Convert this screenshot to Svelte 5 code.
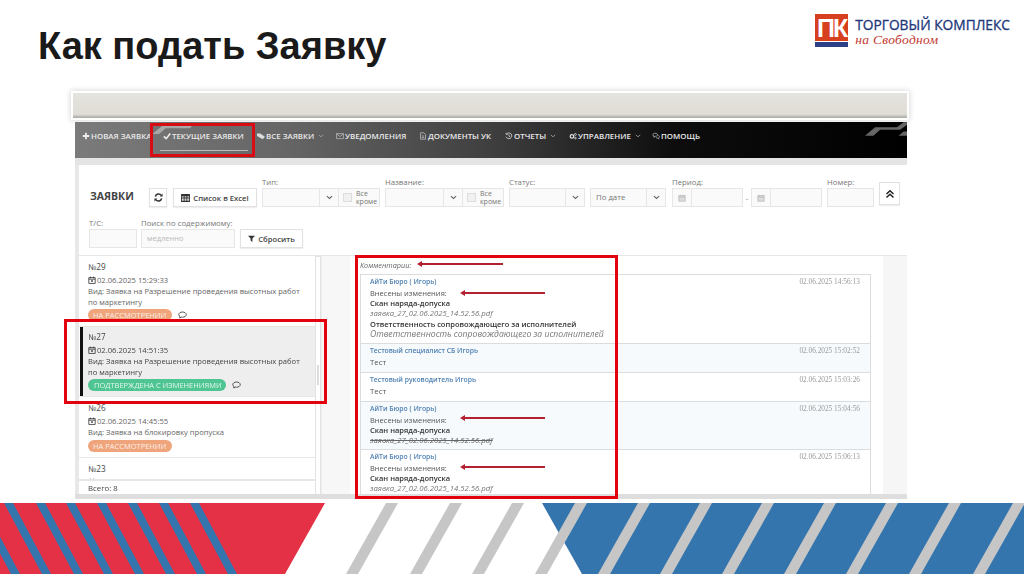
<script>
  const nav = [
    { t: 'Новая заявка', i: 'plus', w: 81 },
    { t: 'Текущие заявки', i: 'check', active: true, w: 94 },
    { t: 'Все заявки', i: 'tag', caret: true, w: 79 },
    { t: 'Уведомления', i: 'mail', w: 83 },
    { t: 'Документы УК', i: 'doc', w: 86 },
    { t: 'Отчеты', i: 'history', caret: true, w: 64 },
    { t: 'Управление', i: 'gears', caret: true, w: 83 },
    { t: 'Помощь', i: 'chat', w: 60 }
  ];
  const tickets = [
    { n: '№29', d: '02.06.2025 15:29:33', v: 'Вид: Заявка на Разрешение проведения высотных работ по маркетингу', s: 'На рассмотрении', c: 'orange', cm: true, h: 71 },
    { n: '№27', d: '02.06.2025 14:51:35', v: 'Вид: Заявка на Разрешение проведения высотных работ по маркетингу', s: 'Подтверждена с изменениями', c: 'green', cm: true, sel: true, h: 70 },
    { n: '№26', d: '02.06.2025 14:45:55', v: 'Вид: Заявка на блокировку пропуска', s: 'На рассмотрении', c: 'orange', h: 61 },
    { n: '№23', d: '02.06.2025 14:33:17', v: '', s: '', h: 22 }
  ];
  const comments = [
    { a: 'АйТи Бюро ( Игорь)', d: '02.06.2025 14:56:13', h: 69, lines: [['Внесены изменения:', 'plain'], ['Скан наряда-допуска', 'bold'], ['заявка_27_02.06.2025_14.52.56.pdf', 'ital'], ['Ответственность сопровождающего за исполнителей', 'bold'], ['Ответственность сопровождающего за исполнителей', 'phrase']] },
    { a: 'Тестовый специалист СБ Игорь', d: '02.06.2025 15:02:52', h: 29, tint: true, msg: 'Тест' },
    { a: 'Тестовый руководитель Игорь', d: '02.06.2025 15:03:26', h: 29, msg: 'Тест' },
    { a: 'АйТи Бюро ( Игорь)', d: '02.06.2025 15:04:56', h: 48, tint: true, lines: [['Внесены изменения:', 'plain'], ['Скан наряда-допуска', 'bold'], ['заявка_27_02.06.2025_14.52.56.pdf', 'strike']] },
    { a: 'АйТи Бюро ( Игорь)', d: '02.06.2025 15:06:13', h: 48, lines: [['Внесены изменения:', 'plain'], ['Скан наряда-допуска', 'bold'], ['заявка_27_02.06.2025_14.52.56.pdf', 'ital']] }
  ];
  const redStripes = [-27, 4, 36, 66, 97, 128, 159, 190];
  const grayStripes = [392, 456, 518, 581, 644, 706, 768, 830, 892, 955, 1019, 1082];
  const arrows = [[417, 264, 503], [460, 293, 545], [460, 418, 545], [460, 467, 545]];
</script>

<div class="slide">
  <header class="head">
    <h1>Как подать Заявку</h1>
    <div class="logo">
      <div class="mark"><span class="pk">ПК</span><i></i></div>
      <div class="brand">
        <b>ТОРГОВЫЙ КОМПЛЕКС</b>
        <em>на Свободном</em>
      </div>
    </div>
  </header>

  <section class="shot">
    <div class="topbar"></div>
    <nav class="nav">
      {#each nav as n}
        <span class="nav-item" class:active={n.active} style="width:{n.w}px">
          <svg class="ni" viewBox="0 0 10 10" aria-hidden="true">
            {#if n.i === 'plus'}<path d="M5 1v8M1 5h8" stroke="#eee" stroke-width="2.2" fill="none"/>
            {:else if n.i === 'check'}<path d="M1 5.5 4 8.3 9 2" stroke="#eee" stroke-width="2" fill="none"/>
            {:else if n.i === 'tag'}<path d="M0 2h4l6 4-3 3-7-4z" fill="#ddd"/>
            {:else if n.i === 'mail'}<path d="M.7 2h8.6v6.3H.7zM.7 2.4 5 5.6l4.3-3.2" stroke="#ccc" stroke-width=".8" fill="none"/>
            {:else if n.i === 'doc'}<path d="M2 1h4l2.2 2.2V9H2zM3.5 5h3M3.5 7h3" stroke="#ccc" stroke-width=".9" fill="none"/>
            {:else if n.i === 'history'}<path d="M2 2.5a3.6 3.6 0 1 1-.6 3.4M1.5 1v2h2M5 3v2.3l1.5 1" stroke="#ddd" stroke-width="1" fill="none"/>
            {:else if n.i === 'gears'}<circle cx="3.7" cy="5.5" r="2.2" fill="none" stroke="#ddd" stroke-width="1.6"/><circle cx="8" cy="3" r="1.2" fill="none" stroke="#ddd" stroke-width="1"/><circle cx="8" cy="7.6" r="1.1" fill="none" stroke="#ddd" stroke-width="1"/>
            {:else}<path d="M1 3.5C1 2.3 2.4 1.6 4 1.6s3 .7 3 1.9-1.400 1.900-3 1.900l-1.800 1.200.3-1.500C1.600 4.900 1 4.300 1 3.500zM8 4.200c.8.400 1.300 1 1.300 1.700 0 .7-.4 1.200-1 1.500l.2 1.100-1.400-.9c-1 0-1.800-.3-2.300-.9" stroke="#ddd" stroke-width=".8" fill="none"/>{/if}
          </svg>
          {n.t}
          {#if n.caret}<svg class="caret" viewBox="0 0 8 5" aria-hidden="true"><path d="M1 1l3 2.600L7 1" stroke="#aaa" fill="none"/></svg>{/if}
        </span>
      {/each}
      <svg class="swoosh left" viewBox="0 0 50 12" aria-hidden="true"><path d="M2 12 14 2h36l-3 3H18L10 12z" fill="#a8a8a8"/></svg>
      <svg class="swoosh right" viewBox="0 0 50 16" aria-hidden="true"><path d="M0 16 12 6h26L46 0h4v3l-8 6H18L10 16zM40 16l6-5h4v5z" fill="#666"/></svg>
    </nav>

    <div class="frame">
      <div class="filters">
        <div class="row r1">
          <h2>ЗАЯВКИ</h2>
          <button class="btn icon"><svg viewBox="0 0 10 10" width="9" height="9" aria-hidden="true"><path d="M1.500 4a3.600 3.600 0 0 1 6.500-1.300M8.500 6A3.600 3.600 0 0 1 2 7.300" stroke="#333" stroke-width="1.700" fill="none"/><path d="M9.500 .6v3.200H6.300zM.5 9.400V6.200h3.200z" fill="#333"/></svg></button>
          <button class="btn excel"><svg viewBox="0 0 10 9" width="9" height="8" aria-hidden="true"><path d="M0 0h10v9H0z" fill="#333"/><path d="M1 2.500h2v1.500H1zM4 2.500h2v1.500H4zM7 2.500h2v1.500H7zM1 5h2v2.500H1zM4 5h2v2.500H4zM7 5h2v2.500H7z" fill="#ddd"/></svg> Список в Excel</button>

          <div class="field w118"><label>Тип:</label>
            <div class="ctl"><span class="grow"></span><span class="arr"><svg viewBox="0 0 8 5" width="7" height="5" aria-hidden="true"><path d="M1 1l3 2.600L7 1" stroke="#666" stroke-width="1.300" fill="none"/></svg></span><span class="chk"><i></i><small>Все<br/>кроме</small></span></div></div>
          <div class="field w119"><label>Название:</label>
            <div class="ctl"><span class="grow"></span><span class="arr"><svg viewBox="0 0 8 5" width="7" height="5" aria-hidden="true"><path d="M1 1l3 2.600L7 1" stroke="#666" stroke-width="1.300" fill="none"/></svg></span><span class="chk"><i></i><small>Все<br/>кроме</small></span></div></div>
          <div class="field w76"><label>Статус:</label>
            <div class="ctl"><span class="grow"></span><span class="arr"><svg viewBox="0 0 8 5" width="7" height="5" aria-hidden="true"><path d="M1 1l3 2.600L7 1" stroke="#666" stroke-width="1.300" fill="none"/></svg></span></div></div>
          <div class="field w76"><label>&nbsp;</label>
            <div class="ctl"><span class="grow val">По дате</span><span class="arr"><svg viewBox="0 0 8 5" width="7" height="5" aria-hidden="true"><path d="M1 1l3 2.600L7 1" stroke="#666" stroke-width="1.300" fill="none"/></svg></span></div></div>
          <div class="field period"><label>Период:</label>
            <div class="dates">
              <div class="ctl date"><span class="cal"><svg viewBox="0 0 10 10" width="8" height="8" aria-hidden="true"><path d="M1 2h8v7H1zM1 4h8M3 1v2M7 1v2" stroke="#bbb" stroke-width="1" fill="#ddd"/></svg></span></div>
              <span class="dash">-</span>
              <div class="ctl date"><span class="cal"><svg viewBox="0 0 10 10" width="8" height="8" aria-hidden="true"><path d="M1 2h8v7H1zM1 4h8M3 1v2M7 1v2" stroke="#bbb" stroke-width="1" fill="#ddd"/></svg></span></div>
            </div></div>
          <div class="field w47"><label>Номер:</label><div class="ctl"></div></div>
          <button class="btn up"><svg viewBox="0 0 10 10" width="10" height="10" aria-hidden="true"><path d="M1.500 5 5 1.800 8.500 5M1.500 8.500 5 5.300l3.500 3.200" stroke="#222" stroke-width="1.500" fill="none"/></svg></button>
        </div>
        <div class="row r2">
          <div class="field w48"><label>Т/С:</label><div class="ctl"></div></div>
          <div class="field w94"><label>Поиск по содержимому:</label><div class="ctl"><span class="grow ph">медленно</span></div></div>
          <button class="btn reset"><svg viewBox="0 0 10 10" width="7" height="7" aria-hidden="true"><path d="M0 1h10L6.300 5v5L3.700 8V5z" fill="#333"/></svg> Сбросить</button>
        </div>
      </div>

      <div class="body">
        <aside class="list">
          <div class="items">
            {#each tickets as t}
              <article class="ticket" class:sel={t.sel} style="height:{t.h}px">
                <div class="num">{t.n}</div>
                <div class="date-line"><svg viewBox="0 0 10 10" width="8" height="8" aria-hidden="true"><path d="M1 2h8v7.300H1zM1 4h8M3 .8v2M7 .8v2" stroke="#333" stroke-width="1" fill="none"/><rect x="4" y="5.300" width="2" height="2" fill="#333"/></svg>{t.d}</div>
                {#if t.v}<p class="vid">{t.v}</p>{/if}
                {#if t.s}
                  <div class="st">
                    <span class="badge {t.c}">{t.s}</span>
                    {#if t.cm}<svg viewBox="0 0 12 10" width="9" height="8" aria-hidden="true"><path d="M1 4.500C1 2.600 3.200 1 6 1s5 1.600 5 3.500S8.800 8 6 8c-.6 0-1.200 0-1.700-.2L2.300 9l.4-1.900C1.600 6.500 1 5.500 1 4.500z" stroke="#333" stroke-width="1.100" fill="none"/></svg>{/if}
                  </div>
                {/if}
              </article>
            {/each}
          </div>
          <div class="total">Всего: 8</div>
        </aside>
        <div class="track"><span></span></div>
        <div class="gap"></div>
        <main class="detail">
          <div class="cap">Комментарии:</div>
          <div class="comments">
            {#each comments as c}
              <div class="comment" class:tint={c.tint} style="height:{c.h}px">
                <div class="c-head"><span class="author">{c.a}</span><span class="when">{c.d}</span></div>
                {#if c.msg}<div class="msg">{c.msg}</div>{/if}
                {#if c.lines}
                  {#each c.lines as l}<div class="ln {l[1]}">{l[0]}</div>{/each}
                {/if}
              </div>
            {/each}
          </div>
        </main>
        <div class="side"></div>
      </div>
    </div>
    <div class="strip"></div>
  </section>

  <svg class="bands" viewBox="0 503 1024 71" aria-hidden="true">
    <defs>
      <clipPath id="redc"><path d="M0 503h325l-40 71H0z"/></clipPath>
    </defs>
    <path d="M0 503h325l-40 71H0z" fill="#e53145"/>
    <g clip-path="url(#redc)">
      {#each redStripes as x}<path d="M{x} 503h9l38 71h-9z" fill="#3575ae"/>{/each}
    </g>
    <path d="M542 503h482v71H582z" fill="#3575ae"/>
    {#each grayStripes as x}<path d="M{x - 6} 503h12l-40 71h-12z" fill="#c6c6c6"/>{/each}
  </svg>

  <div class="mark-box nav-box"></div>
  <div class="mark-box left-box"></div>
  <div class="mark-box right-box"></div>
  {#each arrows as a}
    <svg class="arrow" style="left:{a[0]}px;top:{a[1] - 4}px;width:{a[2] - a[0]}px" height="8" aria-hidden="true">
      <path d="M0 4l5-3v2h{a[2] - a[0] - 5}v2H5v2z" fill="#b3202f"/>
    </svg>
  {/each}
</div>

<style>
  :global(body) { margin: 0; background: #fff; }
  * { box-sizing: border-box; }
  .slide { position: relative; width: 1024px; height: 574px; overflow: hidden; background: #fff; font-family: "Open Sans", sans-serif; display: flex; flex-direction: column; }

  .head { height: 90px; display: flex; justify-content: space-between; padding: 14px 14px 0 38px; flex: none; }
  h1 { margin: 12px 0 0; font: 700 38px/40px "Liberation Sans", sans-serif; color: #1a1a1a; }
  .logo { display: flex; gap: 7px; height: 34px; }
  .mark { width: 33px; display: flex; flex-direction: column; }
  .pk { height: 27px; background: #d7401f; color: #fff; font: 700 25px/28px "Liberation Sans", sans-serif; letter-spacing: -2px; text-align: center; overflow: hidden; }
  .mark i { height: 5px; margin-top: 1px; background: #2d3f86; }
  .brand { display: flex; flex-direction: column; }
  .brand b { font: 400 13.750px/15px "Open Sans", sans-serif; color: #20377a; -webkit-text-stroke: .3px #20377a; margin-top: 3px; white-space: nowrap; }
  .brand em { font: italic 13.500px/16px "Liberation Serif", serif; color: #c23a32; letter-spacing: .3px; }

  .shot { width: 832px; margin: 3px 0 0 75px; flex: none; height: 406px; filter: blur(.45px); display: flex; flex-direction: column; }
  .topbar { margin-left: -2px; height: 25px; flex: none; background: linear-gradient(#e5e3dd, #dfddd6 85%, #a9a8a3); box-shadow: 0 0 0 2px #fff, 0 0 5px 3px #ddd; }
  .nav { position: relative; margin-top: 4px; height: 36px; flex: none; display: flex; align-items: center; padding: 0 0 8px 7px; background: linear-gradient(90deg, #7b7b7b, #666 25%, #3f3f3f 50%, #0d0d0d 72%, #000); overflow: hidden; }
  .nav-item { position: relative; display: flex; align-items: center; flex: none; gap: 1px; height: 100%; white-space: nowrap; color: #e9e9e9; font-size: 7.900px; font-weight: 600; text-transform: uppercase; }
  .nav-item.active::after { content: ""; position: absolute; left: -3px; right: 9px; bottom: -1px; height: 1px; background: #bbb; }
  .ni { width: 8px; height: 8px; flex: none; }
  .caret { width: 6px; height: 4px; margin-left: 3px; }
  .swoosh { position: absolute; top: 2px; }
  .swoosh.left { left: 74px; width: 45px; height: 10px; }
  .swoosh.right { right: 0; top: 0; width: 42px; height: 14px; }

  .frame { flex: 1; min-height: 0; margin-top: 7px; border-left: 4px solid #e8e8e8; background: #fff; display: flex; flex-direction: column; position: relative; }
  .frame::before { content: ""; position: absolute; left: -4px; right: 0; top: -7px; height: 7px; background: #e4e4e4; }
  .filters { height: 90px; flex: none; padding: 11px 0 0 10px; color: #666; }
  .row { display: flex; align-items: flex-end; }
  .r1 { height: 31px; }
  .r2 { height: 36px; margin-top: 5px; gap: 4px; }
  h2 { margin: 0 16px 3px 1px; width: 43px; font-size: 10.500px; line-height: 16px; font-weight: 700; color: #444; }
  label { display: block; height: 12px; font-size: 7.800px; line-height: 12px; color: #777; white-space: nowrap; }
  .btn { padding: 0; height: 19px; border: 1px solid #e2e2e2; background: #fff; box-shadow: 0 1px 1px #eee; font: 600 7.700px "Open Sans", sans-serif; color: #444; display: flex; align-items: center; justify-content: center; gap: 3px; }
  .icon { width: 18px; margin-right: 6px; }
  .excel { width: 84px; margin-right: 5px; }
  .up { width: 21px; height: 23px; margin: 0 0 2px 0; }
  .reset { width: 63px; margin-left: 1px; }
  .ctl { height: 19px; display: flex; border: 1px solid #e6e6e6; background: #fafafa; }
  .field { flex: none; margin-right: 5px; }
  .r2 .field { margin-right: 0; }
  .w118 { width: 118px; } .w119 { width: 119px; } .w76 { width: 76px; } .w47 { width: 47px; } .w48 { width: 48px; } .w94 { width: 94px; }
  .period { width: 150px; margin-right: 5px; margin-left: 1px; }
  .grow { flex: 1; min-width: 0; }
  .val { font-size: 7.800px; line-height: 17px; padding-left: 5px; color: #777; }
  .ph { font-size: 7.500px; line-height: 17px; padding-left: 5px; color: #b8b8b8; }
  .arr { width: 19px; border-left: 1px solid #e6e6e6; display: flex; align-items: center; justify-content: center; }
  .chk { width: 41px; border-left: 1px solid #e6e6e6; display: flex; align-items: center; gap: 4px; padding-left: 4px; }
  .chk i { width: 9px; height: 9px; border: 1px solid #ddd; background: #f1f1f1; flex: none; }
  .chk small { font-size: 7px; line-height: 7.500px; color: #777; }
  .dates { display: flex; align-items: center; }
  .date { width: 71px; }
  .cal { width: 19px; border-right: 1px solid #e6e6e6; display: flex; align-items: center; justify-content: center; }
  .dash { width: 8px; text-align: center; font-size: 8px; color: #888; }

  .body { flex: 1; min-height: 0; display: flex; border-top: 1px solid #e6e6e6; }
  .list { width: 236px; flex: none; display: flex; flex-direction: column; }
  .items { flex: 1; min-height: 0; overflow: hidden; }
  .ticket { padding: 5px 0 0 9px; overflow: hidden; border-bottom: 1px solid #e6e6e6; color: #666; }
  .ticket.sel { background: #eeeeee; box-shadow: inset 3px 0 #fff; position: relative; color: #444; padding-top: 4px; }
  .ticket.sel::before { content: ""; position: absolute; left: 1px; top: 0; bottom: 0; width: 3px; background: #111; }
  .num { font-size: 8.200px; line-height: 12px; color: #444; }
  .date-line { margin-top: 1px; display: flex; align-items: center; gap: 1px; font-size: 7.650px; line-height: 12px; }
  .vid { margin: 0; width: 218px; font-size: 7.600px; line-height: 10.500px; }
  .st { margin-top: 2px; display: flex; align-items: center; gap: 6px; }
  .badge { display: block; height: 12px; padding: 0 6px; border-radius: 6px; font-size: 7.500px; font-weight: 500; line-height: 12px; text-transform: uppercase; color: rgba(255,255,255,.85); white-space: nowrap; }
  .orange { background: #efa47c; width: 84px; overflow: hidden; padding: 0 5px; }
  .green { background: #4fc593; width: 138px; }
  .total { height: 17px; border-top: 1px solid #e6e6e6; padding-left: 9px; font-size: 7.800px; line-height: 14px; color: #444; }
  .track { width: 6px; flex: none; border: 1px solid #e2e2e2; position: relative; }
  .track span { position: absolute; left: 1px; top: 108px; width: 2px; height: 20px; background: #ddd; }
  .gap { width: 29px; flex: none; background: #f7f7f7; border-left: 1px solid #eee; }
  .detail { width: 533px; flex: none; padding-left: 10px; }
  .cap { height: 18px; font-size: 7.300px; line-height: 18px; font-style: italic; color: #666; }
  .comments { border: 1px solid #dcdcdc; border-width: 1px 1px 0 1px; width: 511px; }
  .comment { padding: 2px 10px 0 9px; border-bottom: 1px solid #d9dde0; overflow: hidden; font-size: 7.500px; line-height: 10px; color: #555; }
  .comment:last-child { border-bottom: 0; }
  .tint { background: #f7fafc; }
  .c-head { display: flex; justify-content: space-between; height: 11px; }
  .author { color: #4f80b2; font-weight: 600; font-size: 6.800px; }
  .when { font: 7.300px/10px "Liberation Serif", serif; color: #999; }
  .msg { font-size: 7.800px; line-height: 11px; }
  .ln { white-space: nowrap; line-height: 10.200px; }
  .bold { font-weight: 600; color: #333; }
  .ital { font-style: italic; color: #777; font-size: 7.750px; }
  .phrase { font-style: italic; color: #777; font-size: 8.650px; }
  .strike { font-style: italic; text-decoration: line-through; color: #666; font-size: 7.750px; }
  .side { flex: 1; background: #f6f6f6; }
  .strip { height: 5px; margin-top: -3px; background: #dedede; flex: none; position: relative; }

  .bands { position: absolute; left: 0; top: 503px; width: 1024px; height: 71px; display: block; }
  .mark-box { position: absolute; border: 3px solid #e3000f; pointer-events: none; }
  .nav-box { left: 150px; top: 123px; width: 105px; height: 34px; border-color: #d90c14; }
  .left-box { left: 64px; top: 319px; width: 263px; height: 85px; }
  .right-box { left: 355px; top: 255px; width: 263px; height: 244px; }
  .arrow { position: absolute; display: block; }
</style>
